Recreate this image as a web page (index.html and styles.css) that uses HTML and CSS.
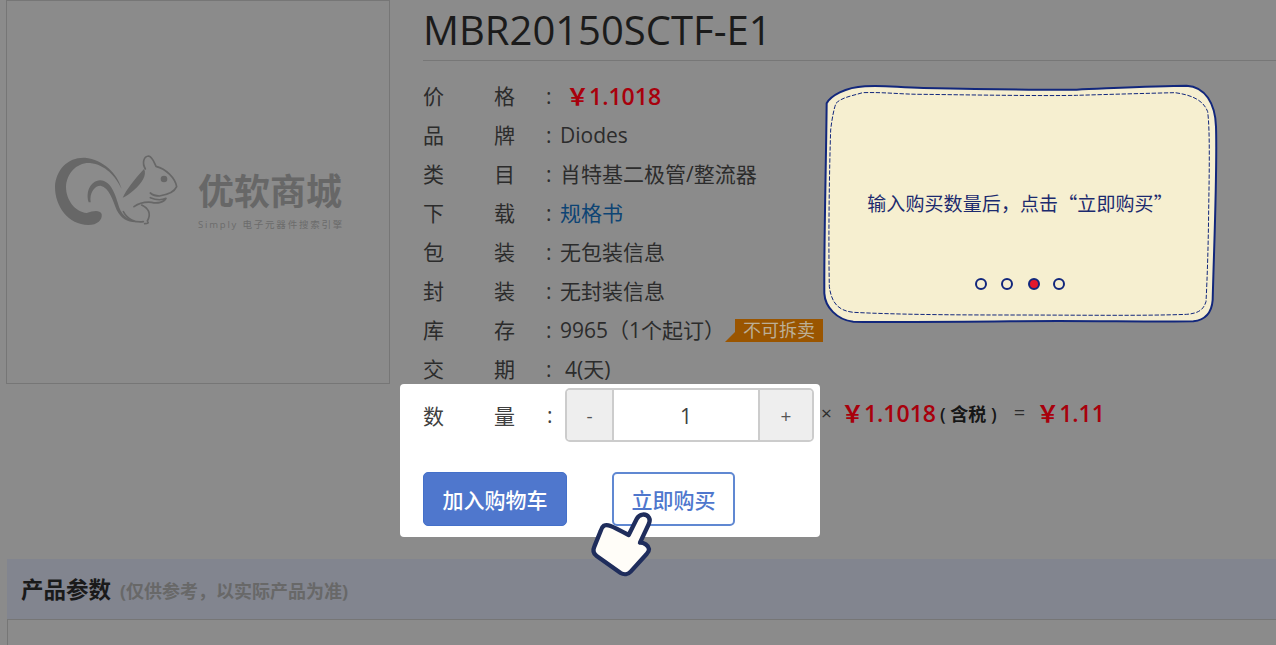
FILE: index.html
```html
<!DOCTYPE html>
<html lang="zh-CN">
<head>
<meta charset="utf-8">
<title>MBR20150SCTF-E1</title>
<link rel="stylesheet" href="styles.css">
</head>
<body>
<div class="page">
  <section class="product">
    <div class="gallery">
      <svg class="squirrel" viewBox="0 0 450 270" aria-hidden="true">
        <path class="sq-fill" d="M245 132C232 85 190 44 135 38C85 36 48 72 45 125C45 185 85 238 145 240C172 240 188 225 185 207C178 194 160 198 140 204C105 200 78 165 78 125C80 85 110 52 150 54C195 58 228 95 245 132Z"/>
        <path class="sq-fill" d="M146 172C136 140 152 108 180 106C215 108 226 150 238 188C248 214 270 230 305 229C275 238 245 226 230 195C218 165 208 128 182 122C162 122 148 145 152 172Z"/>
        <path class="sq-fill" d="M248 158C262 130 282 105 312 72C322 90 305 115 282 135C270 146 258 154 248 158Z"/>
        <path class="sq-line" d="M316 72C305 52 312 34 326 33C338 36 342 52 348 64C378 72 405 98 410 125C402 143 380 150 358 153C348 153 338 150 331 144"/>
        <circle class="sq-eye" cx="372" cy="102" r="10"/>
        <path class="sq-line" d="M331 158C345 164 360 168 378 160C372 172 352 176 335 172C315 170 295 176 282 185M305 180C325 190 335 205 322 228C328 234 322 236 314 236M250 200C262 222 285 234 310 230"/>
      </svg>
      <div class="brand">
        <span class="brand-name">优软商城</span>
        <span class="brand-sub">Simply 电子元器件搜索引擎</span>
      </div>
    </div>
    <div class="info">
      <h1 class="title">MBR20150SCTF-E1</h1>
      <div class="rows">
        <div class="row"><span class="label"><i>价</i><i>格</i></span><span class="colon">:</span><span class="price price-first">￥1.1018</span></div>
        <div class="row"><span class="label"><i>品</i><i>牌</i></span><span class="colon">:</span><span>Diodes</span></div>
        <div class="row"><span class="label"><i>类</i><i>目</i></span><span class="colon">:</span><span>肖特基二极管/整流器</span></div>
        <div class="row"><span class="label"><i>下</i><i>载</i></span><span class="colon">:</span><a class="link" href="#">规格书</a></div>
        <div class="row"><span class="label"><i>包</i><i>装</i></span><span class="colon">:</span><span>无包装信息</span></div>
        <div class="row"><span class="label"><i>封</i><i>装</i></span><span class="colon">:</span><span>无封装信息</span></div>
        <div class="row"><span class="label"><i>库</i><i>存</i></span><span class="colon">:</span><span>9965（1个起订）</span><span class="tag">不可拆卖</span></div>
        <div class="row"><span class="label"><i>交</i><i>期</i></span><span class="colon">:</span><span class="lead">4(天)</span></div>
        <div class="row total"><span class="times">×</span><span class="price">￥1.1018</span><span class="tax">( 含税 )</span><span class="equals">=</span><span class="price">￥1.11</span></div>
      </div>
    </div>
  </section>

  <section class="params">
    <div class="params-head"><strong>产品参数</strong><span>(仅供参考，以实际产品为准)</span></div>
    <div class="params-body"></div>
  </section>

  <div class="spotlight">
    <div class="qty">
      <span class="label"><i>数</i><i>量</i></span><span class="colon">:</span>
      <div class="stepper"><span class="step step-minus">-</span><span class="count">1</span><span class="step step-plus">+</span></div>
    </div>
    <div class="actions">
      <button class="btn btn-solid" type="button">加入购物车</button>
      <button class="btn btn-line" type="button">立即购买</button>
    </div>
  </div>

  <svg class="hand" viewBox="0 0 270 240" aria-hidden="true">
    <path d="M72 62C82 57 90 60 146 90L170 42C178 26 198 24 207 38C211 45 209 52 205 60L180 113C192 113 205 120 207 132C207 138 205 142 200 147L152 200C145 208 132 210 122 204L50 153C40 146 38 136 43 125L62 78C64 70 66 66 72 62Z"/>
  </svg>

  <div class="tip">
    <svg class="tip-shape" viewBox="0 0 1260 795" aria-hidden="true">
      <path class="tip-edge" d="M50 100C62 78 105 52 165 49C225 45 265 53 340 54C500 57 690 60 800 59C900 55 1040 47 1130 47C1185 50 1216 100 1218 170C1222 300 1213 500 1208 690C1205 730 1185 750 1150 754C1000 756 800 751 600 754C400 756 250 757 130 755C80 750 45 710 43 670C42 500 48 300 50 100Z"/>
      <path class="tip-stitch" d="M78 100C95 82 125 78 158 68C225 66 270 73 340 73C500 75 700 78 800 76C900 73 1010 70 1095 68C1145 75 1180 90 1193 125C1200 180 1198 300 1196 420C1195 520 1192 620 1188 695C1180 720 1165 730 1130 733C1000 738 800 735 600 735C400 735 250 733 130 727C85 722 65 700 58 650C55 500 58 300 62 180C66 145 72 115 78 100Z"/>
    </svg>
    <p class="tip-text">输入购买数量后，点击“立即购买”</p>
    <div class="dots"><span class="dot"></span><span class="dot"></span><span class="dot dot-on"></span><span class="dot"></span></div>
  </div>
</div>
</body>
</html>
```

FILE: styles.css
```css
* { box-sizing: border-box; }
html, body { margin: 0; padding: 0; }
body {
  font-family: "Open Sans", "Noto Sans CJK SC", sans-serif;
  color: #2c2c2c;
  font-size: 21px;
}
.page {
  position: relative;
  width: 1276px;
  height: 645px;
  overflow: hidden;
  background: #8b8b8b;
}
.product { display: flex; padding-left: 6px; height: 383px; }
.gallery {
  width: 384px;
  height: 384px;
  border: 1px solid #767676;
  display: flex;
  align-items: center;
  padding: 0 0 6px 33px;
}
.squirrel { width: 150px; height: 90px; flex: none; margin-top: 2px; }
.sq-fill { fill: #676767; }
.sq-line { fill: none; stroke: #676767; stroke-width: 5; stroke-linecap: round; stroke-linejoin: round; }
.sq-eye { fill: #676767; }
.brand { display: flex; flex-direction: column; margin: 23px 0 0 8px; }
.brand-name { font-size: 36px; line-height: 44px; font-weight: 700; color: #676767; white-space: nowrap; width: 146px; }
.brand-sub { font-size: 9.5px; line-height: 12px; color: #6c6c6c; white-space: nowrap; letter-spacing: 1.8px; margin-top: 5px; }

.info { flex: 1; margin-left: 33px; min-width: 0; }
.title {
  margin: 0;
  height: 61px;
  font-size: 40px;
  font-weight: 500;
  line-height: 60px;
  color: #1b1b1b;
  border-bottom: 1px solid #777;
}
.rows { padding-top: 15px; }
.row { display: flex; align-items: center; height: 39.1px; line-height: 28px; white-space: nowrap; }
.label { display: flex; justify-content: space-between; width: 92px; flex: none; }
.label i { font-style: normal; }
.colon { width: 45px; padding-left: 31px; flex: none; }
.link { color: #0d4474; text-decoration: none; }
.price { color: #a8000c; font-weight: 600; font-size: 23px; }
.price-first { margin-left: 6px; }
.lead { margin-left: 5px; }
.tag {
  position: relative;
  margin-left: 10px;
  height: 23px;
  line-height: 23px;
  width: 88px;
  background: #9a5500;
  color: #bcae96;
  font-size: 18px;
  text-align: center;
}
.tag::before {
  content: "";
  position: absolute;
  left: -10px;
  bottom: 0;
  border-style: solid;
  border-width: 0 0 10px 10px;
  border-color: transparent transparent #9a5500 transparent;
}
.total { height: 50px; margin-top: -1px; padding-left: 398px; }
.times { margin-right: 9px; font-size: 19px; }
.tax { margin: 2px 17px 0 4px; font-size: 18px; font-weight: 600; color: #161616; }
.equals { margin-right: 11px; font-size: 20px; }

.params { margin: 176px 0 0 7px; }
.params-head {
  height: 60px;
  padding: 15px 0 0 14px;
  background: #82858f;
  line-height: 32px;
  white-space: nowrap;
}
.params-head strong { font-size: 22.5px; font-weight: 700; color: #1a1a1a; }
.params-head span { margin-left: 9px; font-size: 18px; font-weight: 700; color: #686868; }
.params-body { height: 60px; border: 1px solid #767676; border-right: 0; border-bottom: 0; }

.spotlight {
  position: absolute;
  left: 400px;
  top: 384px;
  width: 420px;
  height: 153px;
  background: #fff;
  border-radius: 4px;
  padding: 4px 6px 0 23px;
}
.qty { display: flex; align-items: center; height: 54px; color: #404040; }
.qty .colon { width: 50px; padding-left: 32px; }
.stepper {
  display: flex;
  width: 249px;
  height: 54px;
  border: 2px solid #ccc;
  border-radius: 5px;
  overflow: hidden;
  text-align: center;
  line-height: 52px;
}
.step { flex: none; background: #eee; color: #555; font-size: 19px; }
.step-minus { width: 45px; }
.step-plus { width: 52px; }
.count { flex: 1; border-left: 2px solid #ccc; border-right: 2px solid #ccc; color: #404040; }
.actions { display: flex; gap: 45px; margin-top: 30px; }
.btn {
  height: 54px;
  border-radius: 5px;
  font-family: inherit;
  font-size: 21px;
  font-weight: 500;
  padding: 0;
  cursor: pointer;
}
.btn-solid { width: 144px; background: #4f77cd; border: 1px solid #4470c9; color: #fff; }
.btn-line { width: 123px; background: #fff; border: 2px solid #6088d2; color: #4f77cd; }

.hand { position: absolute; left: 580px; top: 505px; width: 90px; height: 80px; }
.hand path { fill: #fffdf8; stroke: #1f2d5c; stroke-width: 13; stroke-linejoin: round; }

.tip {
  position: absolute;
  left: 810px;
  top: 70px;
  width: 420px;
  height: 265px;
  display: flex;
  flex-direction: column;
  align-items: center;
}
.tip-shape { position: absolute; inset: 0; width: 100%; height: 100%; }
.tip-edge { fill: #f6efd0; stroke: #12277c; stroke-width: 6; }
.tip-stitch { fill: none; stroke: #12277c; stroke-width: 3; stroke-dasharray: 13 5; }
.tip-text {
  position: relative;
  margin: 119px 0 0;
  line-height: 28px;
  font-family: "Noto Sans CJK SC", sans-serif;
  font-size: 19px;
  letter-spacing: .1px;
  color: #1c2a6e;
  white-space: nowrap;
}
.dots { position: relative; display: flex; gap: 14px; margin-top: 61px; }
.dots .dot:nth-child(3) { margin-left: 1px; margin-right: -1px; }
.dot { width: 12px; height: 12px; border: 2px solid #12277c; border-radius: 50%; }
.dot-on { background: #e3182d; }
```
